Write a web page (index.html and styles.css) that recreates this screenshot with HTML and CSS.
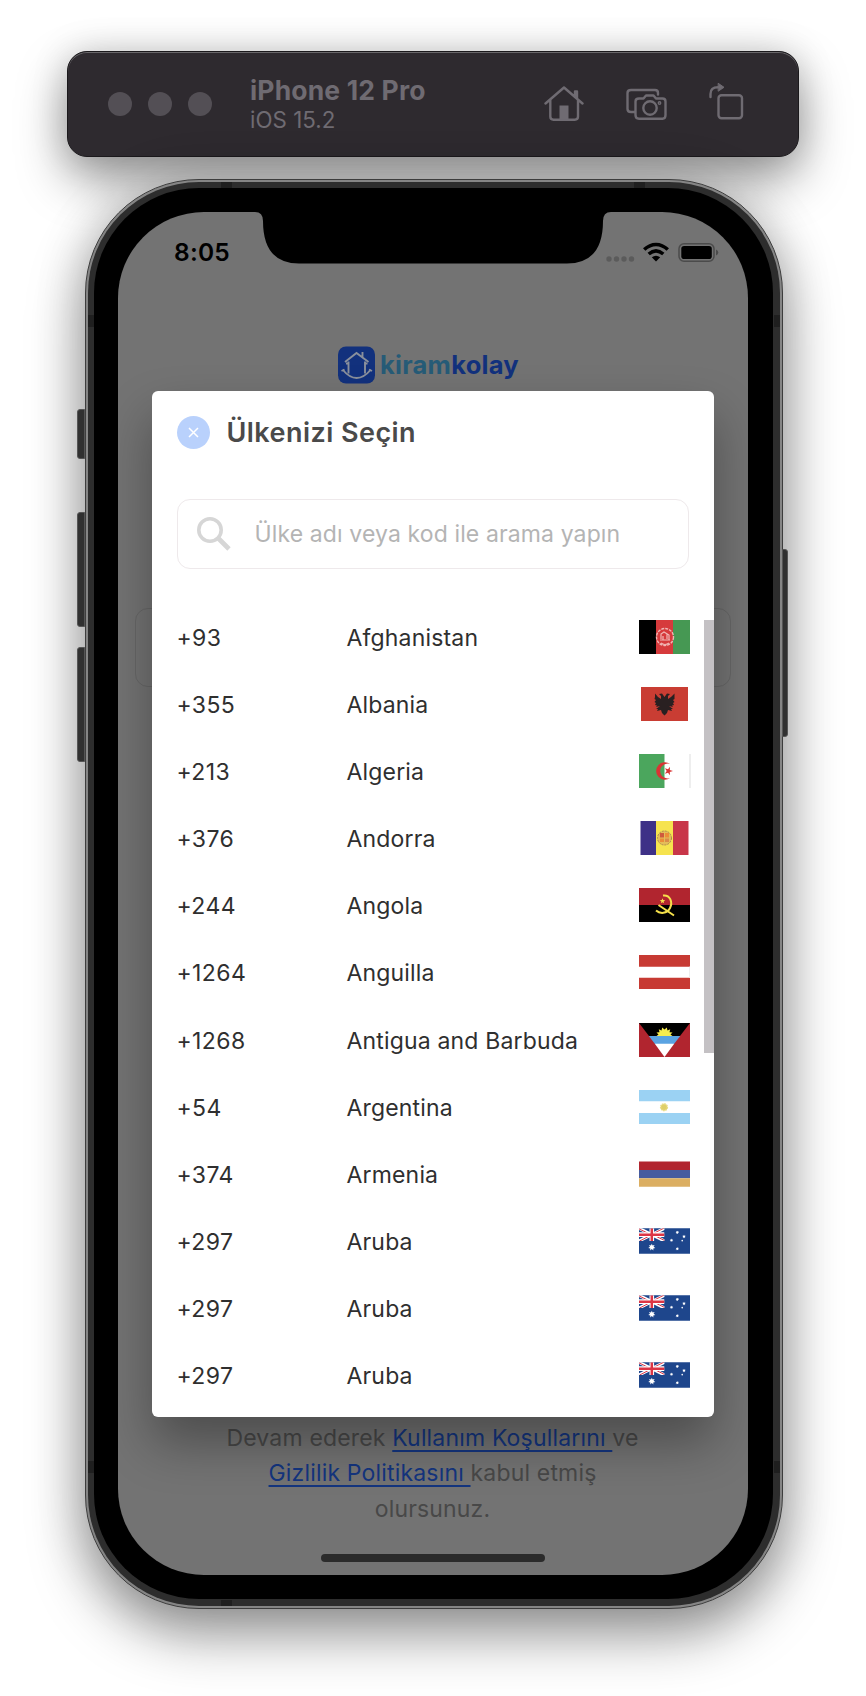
FILE: index.html
```html
<!DOCTYPE html>
<html lang="tr">
<head>
<meta charset="utf-8">
<title>Kiramkolay</title>
<link rel="stylesheet" href="styles.css">
</head>
<body>
<svg class="defs" aria-hidden="true">
  <defs>
    <path id="star" d="M0-5 1.1-2.3 3.9-3.1 2.5-.6 4.9 1.1 2 1.6 2.2 4.5 0 2.6-2.2 4.5-2 1.6-4.9 1.1-2.5-.6-3.9-3.1-1.1-2.3Z"/>
    <symbol id="flag-au" viewBox="0 0 51 25.5">
      <path fill="#1e468c" d="M0 0H51V25.5H0Z"/>
      <svg width="25.5" height="12.8" viewBox="0 0 25.5 12.8">
        <path stroke="#fff" stroke-width="3" d="M0 0 25.5 12.8M25.5 0 0 12.8"/>
        <path stroke="#dc3545" stroke-width="1" d="M0 .6 11 6M25.5 12.2 14.5 6.8M24.8 0 14 5.4M.6 12.8 11 7.4"/>
        <path stroke="#fff" stroke-width="4.6" d="M12.8 0V12.8M0 6.4H25.5"/>
        <path stroke="#dc3545" stroke-width="2.5" d="M12.8 0V12.8M0 6.4H25.5"/>
      </svg>
      <g fill="#fff">
        <use href="#star" transform="translate(12.8 19) scale(.72)"/>
        <use href="#star" transform="translate(38.3 4.2) scale(.36)"/>
        <use href="#star" transform="translate(32.5 12) scale(.36)"/>
        <use href="#star" transform="translate(45 8.4) scale(.36)"/>
        <use href="#star" transform="translate(38.3 20.5) scale(.36)"/>
        <circle cx="43.2" cy="12.4" r=".8"/>
      </g>
    </symbol>
  </defs>
</svg>

<header class="toolbar">
  <div class="lights"><i></i><i></i><i></i></div>
  <div class="device">
    <div class="device-name">iPhone 12 Pro</div>
    <div class="device-os">iOS 15.2</div>
  </div>
  <svg class="tools" viewBox="0 0 200 42" fill="none" stroke="#6f6b72" stroke-width="2.4" stroke-linecap="round" stroke-linejoin="round">
    <path d="M1.5 22.5 20 6.5 38.500 22.500M6.300 19V35.500Q6.300 38.700 9.500 38.700H30.800Q34 38.700 34 35.500V19M31 15V10.500H33V17"/>
    <path fill="#6f6b72" stroke="none" d="M15.500 24.500H24.500V38.500H15.500Z"/>
    <path d="M90 31H87Q83.500 31 83.500 28V12Q83.500 9 87 9H111Q114 9 114 12V13.500M95 17.500H99.500L102 14.500H109.500L112 17.500H118.500Q121.500 17.500 121.500 20.500V34Q121.500 37.700 118.500 37.700H95Q91.500 37.700 91.500 34V20.500Q91.500 17.500 95 17.500Z"/>
    <circle cx="106" cy="27" r="6.700"/><circle cx="115.500" cy="22" r=".7"/>
    <rect x="174.500" y="14.200" width="23.500" height="23" rx="3"/>
    <path d="M166.500 16V13Q166.500 6.300 174 6.300"/>
    <path fill="#6f6b72" stroke-width="1" d="M174.500 2.500 180 6.300 174.500 10Z"/>
  </svg>
</header>

<main class="phone">
  <i class="key key-mute"></i><i class="key key-up"></i><i class="key key-down"></i><i class="key key-power"></i>
  <div class="band">
    <i class="seam seam-t1"></i><i class="seam seam-t2"></i><i class="seam seam-b1"></i>
    <i class="seam side seam-l1"></i><i class="seam side seam-l2"></i><i class="seam side seam-r1"></i><i class="seam side seam-r2"></i>
    <div class="bezel">
      <div class="screen">
        <svg class="notch" viewBox="0 0 356 52"><path d="M0 0Q8 0 8 9 8 51.500 44 51.500H312Q348 51.500 348 9 348 0 356 0V-2H0Z"/></svg>
        <div class="status">
          <span class="time">8:05</span>
          <svg class="indicators" viewBox="0 0 114 24">
            <g fill="#5b5b5b"><circle cx="4" cy="18" r="2.700"/><circle cx="11.500" cy="18" r="2.700"/><circle cx="19" cy="18" r="2.700"/><circle cx="26.500" cy="18" r="2.700"/></g>
            <g fill="none" stroke="#000" stroke-width="3.500">
              <path d="M39.200 8.500C46.500 1.700 55.500 1.700 62.800 8.500"/><path d="M43.700 13C48.500 8.800 53.500 8.800 58.300 13"/>
            </g>
            <path d="M51 20.500 46.800 16.300Q51 13 55.200 16.300Z"/>
            <rect x="74" y="2.700" width="35" height="17.600" rx="5" fill="none" stroke="#4b4b4b" stroke-width="1.500"/>
            <rect x="76.300" y="5" width="30.500" height="13" rx="2.800"/>
            <path fill="#4b4b4b" d="M111 8.500Q113.300 9.500 113.300 11.500T111 14.500Z"/>
          </svg>
        </div>
        <div class="brand">
          <svg class="brand-mark" viewBox="0 0 37 37">
            <rect width="37" height="37" rx="8" fill="#12317d"/>
            <g fill="none" stroke="#8a909c" stroke-width="1.900">
              <path d="M7 15.500 18.500 6.500 30.500 15.500M24.500 10.500V5.500"/><path d="M10.500 15V27M27 15V27M8 17H10.500M27 17H29.500"/>
              <path d="M4.500 23Q18.500 40 33 23M3.500 24.500 6.500 23M31 23 34 24.500"/>
            </g>
          </svg>
          <span class="brand-name"><span class="brand-a">kiram</span><span class="brand-b">kolay</span></span>
        </div>
        <div class="phone-field"></div>
        <p class="terms">Devam ederek <a>Kullanım Koşullarını </a>ve<br><a>Gizlilik Politikasını </a>kabul etmiş<br>olursunuz.</p>
        <div class="home-bar"></div>

        <section class="modal">
          <div class="modal-head">
            <svg class="close" viewBox="0 0 33 33"><circle cx="16.500" cy="16.500" r="16.500" fill="#b9d1fc"/><path d="M12 12 21 21M21 12 12 21" stroke="#fff" stroke-width="1.500"/></svg>
            <h1>Ülkenizi Seçin</h1>
          </div>
          <div class="search">
            <svg viewBox="0 0 34 34" fill="none" stroke="#d6d6d6"><circle cx="13" cy="13" r="11.200" stroke-width="3.600"/><path d="M21 21 32 32" stroke-width="4.800"/></svg>
            <span>Ülke adı veya kod ile arama yapın</span>
          </div>
          <div class="list">
            <div class="row"><span class="code">+93</span><span class="name">Afghanistan</span>
              <svg class="flag" viewBox="0 0 51 34"><path d="M0 0H17V34H0Z"/><path fill="#d63a3c" d="M17 0H34V34H17Z"/><path fill="#469853" d="M34 0H51V34H34Z"/><g fill="none" stroke="#f0b7b5"><circle cx="26" cy="17" r="8.500" stroke-dasharray="3 1" stroke-width="1.400"/><path d="M21 20H31M22 19V14L25 12 30 15V20M24 20V16M28 19V14M22 23Q26 26 30 23" stroke-width="1.200"/></g></svg></div>
            <div class="row"><span class="code">+355</span><span class="name">Albania</span>
              <svg class="flag" viewBox="0 0 51 34"><path fill="#c93d33" d="M2 0H49V34H2Z"/><path fill="#292021" d="M25.500 10 23 6.500 20 7 22 9V12L19 10 16 6.500V10L15.500 12 17 13 15.500 15 17 16 16 18 18 18.500 17 20 21 19 17 22 19 22 18 24 22 23 23 26 25.500 28.500 28 26 29 23 33 24 32 22 34 22 30 19 34 20 33 18.500 35 18 34 16 35.500 15 34 13 35.500 12V6.500L32 10 29 12V9L31 7 28 6.500Z"/></svg></div>
            <div class="row"><span class="code">+213</span><span class="name">Algeria</span>
              <svg class="flag" viewBox="0 0 51 34"><path fill="#4ba65d" d="M0 0H25.500V34H0Z"/><path stroke="#e8e8e8" stroke-width="1.500" d="M51 0V34"/><path fill="#d93434" d="M31 10A8.700 8.700 0 1 0 31 24 7.400 7.400 0 1 1 31 10Z"/><path fill="#d93434" d="M34 17 30.800 18 31 21.300 29 18.700 25.900 19.800 27.700 17 25.900 14.200 29 15.300 31 12.700 30.800 16Z"/></svg></div>
            <div class="row"><span class="code">+376</span><span class="name">Andorra</span>
              <svg class="flag" viewBox="0 0 51 34"><path fill="#3e3187" d="M1.500 0H17V34H1.500Z"/><path fill="#f6e34e" d="M17 0H34V34H17Z"/><path fill="#c83649" d="M34 0H49.500V34H34Z"/><circle cx="25.500" cy="17" r="7" fill="#e4bd59" stroke="#a98551" stroke-dasharray="2 1"/><path fill="#cf5a3d" d="M21 12H25V16.500H21Z"/><path fill="#ec8d38" d="M26 12H30V16.500H26ZM21 17.500H25V21H21Z"/><path stroke="#cf5a3d" d="M27 17.500V21M29 17.500V21"/></svg></div>
            <div class="row"><span class="code">+244</span><span class="name">Angola</span>
              <svg class="flag" viewBox="0 0 51 34"><path fill="#b1252f" d="M0 0H51V17H0Z"/><path d="M0 17H51V34H0Z"/><path fill="none" stroke="#f6e14b" stroke-width="2" d="M24 7.500C31 6.500 34 14 31 20 28 26 21 26 17 22.500M19.500 17 35 27.500"/><path fill="#f6e14b" transform="translate(23.500 13) scale(.55)" d="M0-5 1.300-1.600 5-1.500 2 .7 3 4.200 0 2.100-3 4.200-2 .7-5-1.500-1.300-1.600Z"/></svg></div>
            <div class="row"><span class="code">+1264</span><span class="name">Anguilla</span>
              <svg class="flag" viewBox="0 0 51 34"><path fill="#c73a33" d="M0 0H51V11.700H0ZM0 22.700H51V34H0Z"/><path stroke="#eee" d="M50.500 11.700V22.700"/></svg></div>
            <div class="row"><span class="code">+1268</span><span class="name">Antigua and Barbuda</span>
              <svg class="flag" viewBox="0 0 51 34"><path fill="#b1252f" d="M0 0H51V34H0Z"/><path d="M0 0H51L41 13H10Z"/><path fill="#f8ed4f" d="M17.500 13 19.500 11.500 17.500 9.500 20.500 9.300 19.800 6.300 22.500 7.500 23.200 4.500 25.500 6.500 27.800 4.500 28.500 7.500 31.200 6.300 30.500 9.300 33.500 9.500 31.500 11.500 33.500 13Z"/><path fill="#5aa3e2" d="M9.800 13H41.200L35 21H16Z"/><path fill="#fff" d="M15.800 20.800H35.200L25.500 34Z"/></svg></div>
            <div class="row"><span class="code">+54</span><span class="name">Argentina</span>
              <svg class="flag" viewBox="0 0 51 34"><path fill="#9bd2f3" d="M0 0H51V11.300H0ZM0 23H51V34H0Z"/><circle cx="25" cy="17.200" r="3.300" fill="#dfcf68" stroke="#e8db83" stroke-width="1.600" stroke-dasharray="1.500 .7"/></svg></div>
            <div class="row"><span class="code">+374</span><span class="name">Armenia</span>
              <svg class="flag" viewBox="0 0 51 34"><path fill="#b1252f" d="M0 4.500H51V13H0Z"/><path fill="#465b9f" d="M0 13H51V21.300H0Z"/><path fill="#dbae62" d="M0 21.300H51V29.700H0Z"/></svg></div>
            <div class="row"><span class="code">+297</span><span class="name">Aruba</span><svg class="flag"><use href="#flag-au" width="51" height="34"/></svg></div>
            <div class="row"><span class="code">+297</span><span class="name">Aruba</span><svg class="flag"><use href="#flag-au" width="51" height="34"/></svg></div>
            <div class="row"><span class="code">+297</span><span class="name">Aruba</span><svg class="flag"><use href="#flag-au" width="51" height="34"/></svg></div>
          </div>
          <div class="scrollbar"></div>
        </section>
      </div>
    </div>
  </div>
</main>
</body>
</html>
```
FILE: styles.css
```css
* { box-sizing: border-box; }
body {
  margin: 0;
  height: 1696px;
  padding-top: 51px;
  display: flex;
  flex-direction: column;
  background: #fff;
  font-family: Inter, "Liberation Sans", sans-serif;
  overflow: hidden;
}
.defs { position: absolute; width: 0; height: 0; }

/* Simulator toolbar */
.toolbar {
  width: 732px;
  height: 106px;
  margin-left: 67px;
  padding: 0 54px 0 40px;
  display: flex;
  align-items: center;
  flex-shrink: 0;
  border-radius: 20px;
  border: 1px solid #1b191c;
  background: #2e2a2f;
  box-shadow: inset 0 1px 0 #69676a, 0 22px 50px rgba(0,0,0,.4), 0 0 36px rgba(0,0,0,.15);
}
.lights { display: flex; gap: 16px; }
.lights i { width: 24px; height: 24px; border-radius: 50%; background: #534f55; }
.device { margin-left: 38px; margin-bottom: 2px; color: #6f6b72; }
.device-name { font-size: 26.5px; font-weight: 700; line-height: 32px; letter-spacing: .15px; white-space: nowrap; }
.device-os { font-size: 22.3px; line-height: 27px; letter-spacing: .05px; }
.tools { width: 200px; height: 42px; margin-left: auto; margin-bottom: 5px; }

/* Phone body */
.phone {
  position: relative;
  width: 698px;
  height: 1430px;
  margin: 22px 0 0 85px;
  flex-shrink: 0;
  border-radius: 114px;
  border: 1px solid #3d3d3d;
  background: #858585;
  padding: 2px;
  box-shadow: 0 26px 56px rgba(0,0,0,.4), 0 0 50px rgba(0,0,0,.17);
}
.band { position: relative; height: 100%; padding: 6px 7px 7px 6px; border-radius: 111px; background: #2d2d2d; }
.bezel { height: 100%; padding: 24px; padding-right: 25px; border-radius: 105px; background: #000; position: relative; }
.screen {
  position: relative;
  height: 100%;
  padding: 0 17px;
  border-radius: 86px;
  background: #737373;
  display: flex;
  flex-direction: column;
}
.key { position: absolute; background: #303030; border: 1px solid #555; }
.key-mute, .key-up, .key-down { left: -9px; width: 8px; border-radius: 3px 0 0 3px; }
.key-mute { top: 229px; height: 50px; }
.key-up { top: 332px; height: 115px; }
.key-down { top: 467px; height: 115px; }
.key-power { right: -6px; top: 369px; width: 6px; height: 188px; border-radius: 0 3px 3px 0; }
.seam { position: absolute; width: 11px; height: 6px; background: #1f1f1f; }
.seam.side { width: 6px; height: 12px; }
.seam-t1 { left: 133px; top: 0; }
.seam-t2 { left: 546px; top: 0; }
.seam-b1 { left: 133px; bottom: 0; }
.seam-l1 { left: 0; top: 133px; }
.seam-l2 { left: 0; top: 1279px; }
.seam-r1 { right: 0; top: 133px; }
.seam-r2 { right: 0; top: 1279px; }

/* Dimmed app screen */
.notch { position: absolute; left: 137px; top: 0; width: 356px; height: 52px; }
.status { height: 56px; padding: 24px 12px 0 39px; margin-bottom: 78px; display: flex; justify-content: space-between; }
.time { font-size: 24.5px; line-height: 32px; font-weight: 600; letter-spacing: .2px; }
.indicators { width: 114px; height: 24px; margin-top: 4.5px; }
.brand { height: 38px; display: flex; justify-content: center; align-items: center; gap: 5px; padding-right: 9px; }
.brand-mark { width: 37px; height: 38px; }
.brand-name { font-size: 25.5px; font-weight: 700; line-height: 38px; letter-spacing: .25px; }
.brand-a { color: #265b77; }
.brand-b { color: #12317d; }
.phone-field { height: 79px; margin-top: 223.500px; border: 1px solid #676767; border-radius: 13px; }
.terms {
  margin: 734px 0 0;
  padding-right: 1px;
  text-align: center;
  font-size: 23px;
  line-height: 35.5px;
  letter-spacing: .17px;
  color: #484848;
  white-space: nowrap;
}
.terms a { color: #14357f; text-decoration: underline; text-decoration-thickness: 1.5px; text-underline-offset: 4px; text-decoration-skip-ink: none; }
.home-bar { width: 224px; height: 8px; margin: 27px auto 0; border-radius: 4px; background: #2b2b2b; }

/* Country picker */
.modal {
  position: absolute;
  left: 33.5px;
  top: 179px;
  width: 562.5px;
  height: 1026px;
  padding: 24px 25px 0;
  border-radius: 6px;
  background: #fff;
  box-shadow: 0 26px 50px rgba(0,0,0,.33);
}
.modal-head { display: flex; align-items: center; gap: 17px; height: 35px; }
.close { width: 33px; height: 33px; }
h1 { margin: 0; font-size: 27px; font-weight: 600; line-height: 35px; letter-spacing: .45px; color: #4a4a4a; white-space: nowrap; }
.search {
  height: 70px;
  margin-top: 49px;
  padding: 0 19px;
  display: flex;
  align-items: center;
  gap: 24px;
  border: 1.5px solid #eee9eb;
  border-radius: 13px;
  font-size: 23px;
  letter-spacing: .12px;
  color: #b4b4b4;
  white-space: nowrap;
}
.search svg { width: 34px; height: 34px; }
.list { margin: 34.2px -0.5px 0 0; }
.row {
  height: 67.15px;
  display: grid;
  grid-template-columns: 170px 1fr 51px;
  align-items: center;
  font-size: 23px;
  letter-spacing: .4px;
  color: #2f2f2f;
}
.row span { padding-top: 2px; }
.row .name { letter-spacing: .17px; }
.flag { width: 51px; height: 34px; overflow: visible; }
.scrollbar { position: absolute; right: 0; top: 228.5px; width: 10px; height: 433px; background: #c4c1c4; }
```
